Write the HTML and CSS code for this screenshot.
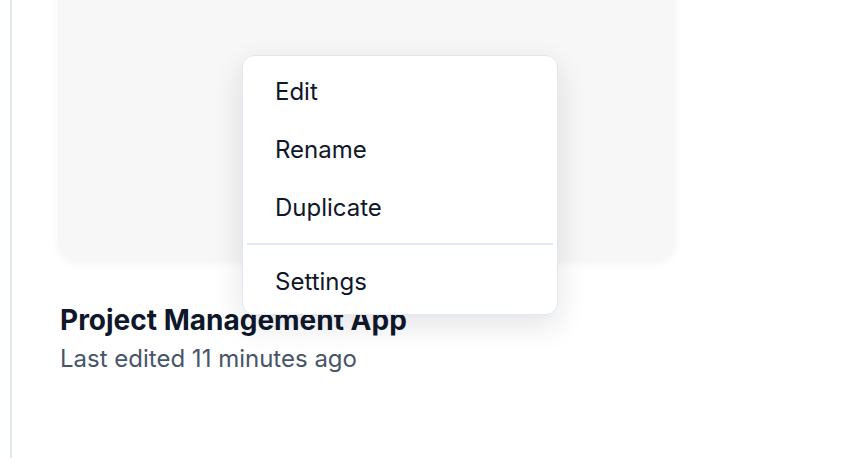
FILE: index.html
```html
<!DOCTYPE html>
<html lang="en">
<head>
<meta charset="UTF-8">
<meta name="viewport" content="width=device-width, initial-scale=1.0">
<title>Projects</title>
<link rel="stylesheet" href="styles.css">
</head>
<body>

<div class="page">
  <div class="project">
    <div class="thumb-wrap">
      <div class="thumb"></div>

      <!-- context menu opened on the card -->
      <div class="menu">
        <div class="menu-item">Edit</div>
        <div class="menu-item">Rename</div>
        <div class="menu-item">Duplicate</div>
        <div class="menu-sep"></div>
        <div class="menu-item">Settings</div>
      </div>
    </div>
    <h3 class="project-title">Project Management App</h3>
    <p class="project-meta">Last edited 11 minutes ago</p>
  </div>
</div>

</body>
</html>
```

FILE: styles.css
```css
body {
  margin: 0;
  font-family: Inter, "Noto Sans", sans-serif;
  background-color: #fff;
  overflow: hidden;
}

.page {
  margin-left: 10px;
  border-left: 2px solid #e2e8f0;
  min-height: 100vh;
  padding-left: 46px;
}

.project {
  width: 617px;
  padding-top: 1px;
}

.thumb-wrap {
  position: relative;
  margin-top: -41px;
}

.thumb {
  height: 301px;
  border-radius: 20px;
  background-color: #f7f7f7;
  box-shadow: 0 2px 8px rgba(0, 0, 0, 0.05);
}

.project-title {
  margin: 41px 0 0 2px;
  font-size: 28px;
  font-weight: 700;
  line-height: 36px;
  color: #0f172a;
}

.project-meta {
  margin: 4px 0 0 2px;
  font-size: 24px;
  line-height: 34px;
  color: #475569;
}

.menu {
  position: absolute;
  left: 184px;
  top: 95px;
  width: 314px;
  padding: 7px 0 3px;
  background-color: #fff;
  border: 1px solid #e2e8f0;
  border-radius: 12px;
  box-shadow: 0 10px 30px rgba(15, 23, 42, 0.12);
}

.menu-item {
  padding: 11px 32px;
  font-size: 24px;
  line-height: 36px;
  color: #0f172a;
  cursor: pointer;
}

.menu-sep {
  height: 2px;
  margin: 6px 4px 8px;
  background-color: #e2e8f0;
}
```
